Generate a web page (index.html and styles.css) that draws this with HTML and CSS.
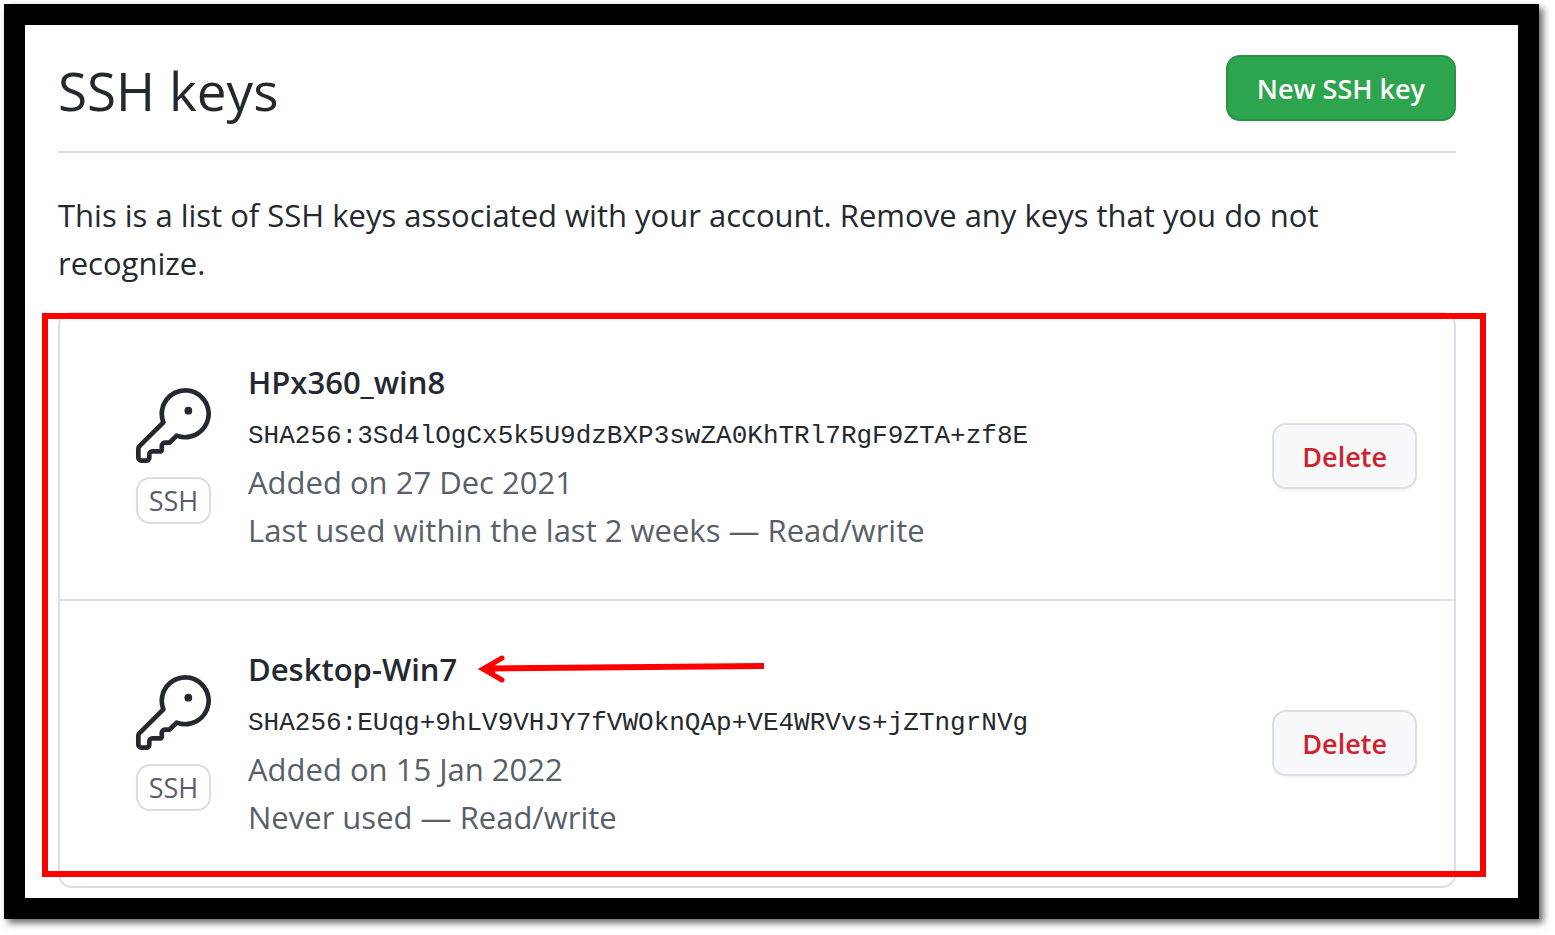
FILE: index.html
```html
<!DOCTYPE html>
<html lang="en">
<head>
<meta charset="utf-8">
<meta name="viewport" content="width=device-width, initial-scale=1">
<title>SSH keys</title>
<link rel="stylesheet" href="styles.css">
</head>
<body>
<svg class="sprite" aria-hidden="true">
  <symbol id="key" viewBox="0 0 24 24">
    <path d="M16.75 8.5a1.25 1.25 0 100-2.5 1.25 1.25 0 000 2.5z"/>
    <path fill-rule="evenodd" d="M15.75 0a8.25 8.25 0 00-7.851 10.79L.513 18.178A1.75 1.75 0 000 19.414v2.836C0 23.217.784 24 1.75 24h1.5A1.75 1.75 0 005 22.25v-1a.25.25 0 01.25-.25h2.735a.75.75 0 00.545-.22l.214-.213A.875.875 0 009 19.948V18.5a.25.25 0 01.25-.25h1.086c.464 0 .91-.184 1.237-.513l1.636-1.636A8.25 8.25 0 1015.75 0zM9 8.25a6.75 6.75 0 114.288 6.287.75.75 0 00-.804.168l-1.971 1.972a.25.25 0 01-.177.073H9.25A1.75 1.75 0 007.5 18.5v1H5.25a1.75 1.75 0 00-1.75 1.75v1a.25.25 0 01-.25.25h-1.5a.25.25 0 01-.25-.25v-2.836a.25.25 0 01.073-.177l7.722-7.721a.75.75 0 00.168-.804A6.73 6.73 0 019 8.25z"/>
  </symbol>
</svg>
<main class="frame">
  <header class="page-header">
    <h1 class="page-title">SSH keys</h1>
    <button type="button" class="btn btn-primary">New SSH key</button>
  </header>
  <p class="intro">This is a list of SSH keys associated with your account. Remove any keys that you do not recognize.</p>
  <div class="list-wrap">
    <ul class="key-list">
      <li class="key-row">
        <div class="key-type">
          <svg class="key-icon" aria-hidden="true"><use href="#key"/></svg>
          <span class="badge">SSH</span>
        </div>
        <div class="key-info">
          <strong class="key-name">HPx360_win8</strong>
          <code class="fingerprint">SHA256:3Sd4lOgCx5k5U9dzBXP3swZA0KhTRl7RgF9ZTA+zf8E</code>
          <span class="meta">Added on 27 Dec 2021</span>
          <span class="meta">Last used within the last 2 weeks — Read/write</span>
        </div>
        <button type="button" class="btn btn-danger">Delete</button>
      </li>
      <li class="key-row">
        <div class="key-type">
          <svg class="key-icon" aria-hidden="true"><use href="#key"/></svg>
          <span class="badge">SSH</span>
        </div>
        <div class="key-info">
          <strong class="key-name">Desktop-Win7
            <svg class="arrow" viewBox="0 0 288 30" aria-hidden="true">
              <path d="M287 12 14 14.500" stroke-width="6"/>
              <path d="M25 4 6 15 25 26" stroke-width="5" stroke-linecap="round"/>
              <path d="M1 15 18 7v15z" fill="#f00" stroke="none"/>
            </svg>
          </strong>
          <code class="fingerprint">SHA256:EUqg+9hLV9VHJY7fVWOknQAp+VE4WRVvs+jZTngrNVg</code>
          <span class="meta">Added on 15 Jan 2022</span>
          <span class="meta">Never used — Read/write</span>
        </div>
        <button type="button" class="btn btn-danger">Delete</button>
      </li>
    </ul>
    <div class="highlight"></div>
  </div>
</main>
</body>
</html>
```
FILE: styles.css
```css
* {
  box-sizing: border-box;
}

body {
  margin: 0;
  padding: 4px 16px 16px 4px;
  background: #fff;
  color: #24292f;
  font-family: "Open Sans", "Noto Sans", sans-serif;
  font-size: 31px;
  line-height: 48px;
}

.sprite {
  position: absolute;
  width: 0;
  height: 0;
}

.frame {
  padding: 30px 62px 10px 33px;
  border: 21px solid #000;
  background: #fff;
  box-shadow: 4px 4px 7px rgba(0, 0, 0, 0.6);
}

.page-header {
  display: flex;
  align-items: flex-start;
  justify-content: space-between;
  padding-bottom: 24px;
  border-bottom: 2px solid #d8dee4;
}

.page-title {
  margin: 0;
  font-size: 53px;
  font-weight: 400;
  line-height: 72px;
}

.btn {
  flex: none;
  height: 66px;
  padding: 0 29px;
  border: 2px solid #dbdee2;
  border-radius: 14px;
  background: #f6f8fa;
  box-shadow: 0 2px 0 rgba(27, 31, 36, 0.04);
  font-family: inherit;
  font-size: 27px;
  font-weight: 600;
}

.btn-primary {
  border-color: #2a9147;
  background: #2da44e;
  color: #fff;
}

.btn-danger {
  padding: 0 28px;
  color: #cf222e;
}

.intro {
  margin: 38px 0 25px;
}

.list-wrap {
  position: relative;
}

.key-list {
  margin: 0;
  padding: 0;
  border: 2px solid #d8dee4;
  border-radius: 14px;
  list-style: none;
}

.key-row {
  display: flex;
  align-items: center;
  padding: 44px 37px 45px 76px;
}

.key-row + .key-row {
  border-top: 2px solid #d8dee4;
}

.key-type {
  display: flex;
  flex: none;
  flex-direction: column;
  align-items: center;
  gap: 14px;
  width: 75px;
}

.key-icon {
  width: 75px;
  height: 75px;
  fill: #24292f;
}

.badge {
  width: 100%;
  border: 2px solid #d8dee4;
  border-radius: 14px;
  color: #57606a;
  font-size: 27px;
  line-height: 43px;
  text-align: center;
}

.key-info {
  display: flex;
  flex: 1;
  flex-direction: column;
  min-width: 0;
  margin-left: 37px;
}

.key-name {
  display: flex;
  align-items: center;
  gap: 20px;
  margin-bottom: 8px;
  font-weight: 600;
}

.arrow {
  width: 288px;
  height: 30px;
  fill: none;
  stroke: #f00;
}

.fingerprint {
  font-family: "Liberation Mono", monospace;
  font-size: 26px;
  line-height: 44px;
}

.meta {
  color: #57606a;
}

.highlight {
  position: absolute;
  inset: 1px -30px 11px -16px;
  border: 6px solid #f00;
  pointer-events: none;
}
```
